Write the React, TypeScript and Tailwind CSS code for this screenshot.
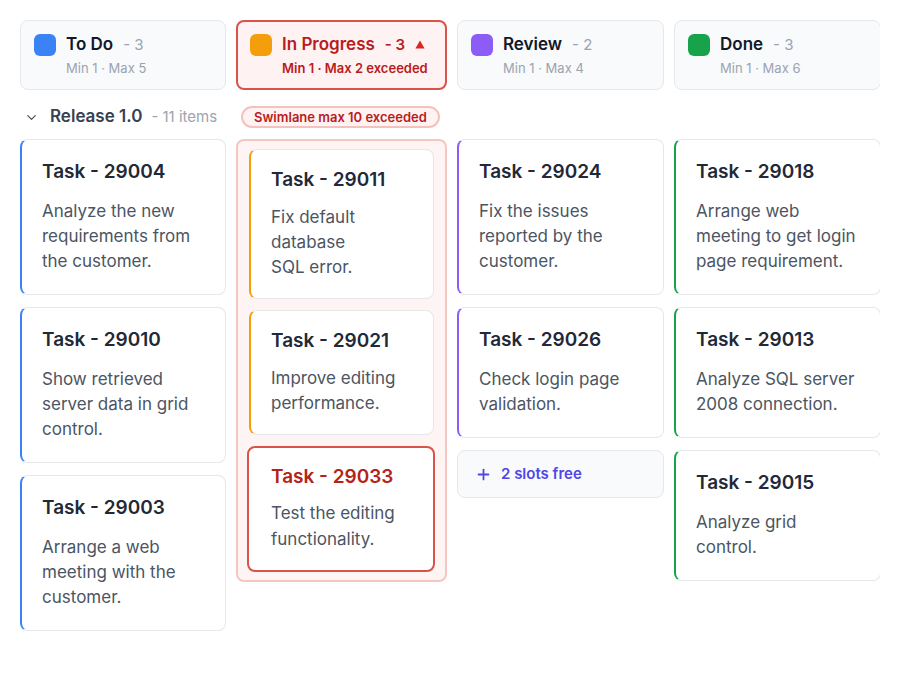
import { ChevronDown, Plus } from 'lucide-react';

type Task = { id: string; text: string; alert?: boolean };

const columns = [
  { key: 'todo', title: 'To Do', count: 3, min: 1, max: 5, square: 'bg-[#3b82f6]' },
  { key: 'progress', title: 'In Progress', count: 3, min: 1, max: 2, square: 'bg-[#f59e0b]' },
  { key: 'review', title: 'Review', count: 2, min: 1, max: 4, square: 'bg-[#8b5cf6]' },
  { key: 'done', title: 'Done', count: 3, min: 1, max: 6, square: 'bg-[#16a34a]' },
];

const tasks: Record<string, Task[]> = {
  todo: [
    { id: '29004', text: 'Analyze the new requirements from the customer.' },
    { id: '29010', text: 'Show retrieved server data in grid control.' },
    { id: '29003', text: 'Arrange a web meeting with the customer.' },
  ],
  progress: [
    { id: '29011', text: 'Fix default database\nSQL error.' },
    { id: '29021', text: 'Improve editing performance.' },
    { id: '29033', text: 'Test the editing functionality.', alert: true },
  ],
  review: [
    { id: '29024', text: 'Fix the issues reported by the customer.' },
    { id: '29026', text: 'Check login page validation.' },
  ],
  done: [
    { id: '29018', text: 'Arrange web meeting to get login page requirement.' },
    { id: '29013', text: 'Analyze SQL server 2008 connection.' },
    { id: '29015', text: 'Analyze grid control.' },
  ],
};

function Header({ col }: { col: (typeof columns)[number] }) {
  const over = col.count > col.max;
  return (
    <div
      className={`flex items-start gap-[10px] rounded-lg ${
        over
          ? 'border-2 border-[#d9534a] bg-[#fef2f2] px-[12px] pt-[12px] pb-[12px]'
          : 'border border-[#e5e7eb] bg-[#f8fafc] px-[13px] pt-[13px] pb-[13px]'
      }`}
    >
      <div className={`h-[22px] w-[22px] shrink-0 rounded-md ${col.square}`} />
      <div className="flex flex-col">
        <div className="flex items-center leading-[21px]">
          <span className={`text-[17px] font-semibold ${over ? 'text-[#b91c1c]' : 'text-[#111827]'}`}>{col.title}</span>
          <span className={`ml-[10px] text-[15px] ${over ? 'font-semibold text-[#b91c1c]' : 'text-[#9ca3af]'}`}>- {col.count}</span>
          {over && (
            <svg width="10" height="9" viewBox="0 0 10 9" className="ml-[10px]">
              <path d="M5 0.5 L9.6 8.5 L0.4 8.5 Z" fill="#dc2626" />
            </svg>
          )}
        </div>
        <div className={`mt-[5px] text-[13px] leading-[16px] ${over ? 'font-semibold text-[#b91c1c]' : 'text-[#9ca3af]'}`}>
          Min {col.min} · Max {col.max}
          {over ? ' exceeded' : ''}
        </div>
      </div>
    </div>
  );
}

function Card({ task, edge, compact }: { task: Task; edge: string; compact?: boolean }) {
  if (task.alert) {
    return (
      <div className="-ml-[2px] -mr-[1px] rounded-lg border-2 border-[#d9534a] bg-white px-[22px] pt-[16px] pb-[18px]">
        <div className="text-[19px] font-semibold leading-[26px] text-[#b42318]">Task - {task.id}</div>
        <div className="mt-[10px] text-[17px] leading-[26px] text-[#4b5563]">{task.text}</div>
      </div>
    );
  }
  return (
    <div
      className={`rounded-lg border border-[#e5e7eb] border-l-2 bg-white pl-[20px] pr-[20px] ${edge} ${
        compact ? 'pt-[17px] pb-[18px]' : 'pt-[19px] pb-[20px]'
      }`}
    >
      <div className="text-[19px] font-semibold leading-[26px] text-[#1f2937]">Task - {task.id}</div>
      <div className={`${compact ? 'mt-[12px]' : 'mt-[14px]'} whitespace-pre-line text-[17px] leading-[25px] text-[#4b5563]`}>
        {task.text}
      </div>
    </div>
  );
}

export default function App() {
  return (
    <div className="h-[700px] w-[900px] bg-white" style={{ fontFamily: 'Inter, "Noto Sans", sans-serif' }}>
      <div className="w-[880px] overflow-hidden pl-[20px] pt-[20px]">
        <div className="grid grid-cols-[206px_211px_207px_207px] gap-x-[10px]">
          {columns.map((c) => (
            <Header key={c.key} col={c} />
          ))}

          <div className="mt-[14px] mb-[9px] flex h-[26px] items-center">
            <ChevronDown size={15} strokeWidth={2} className="ml-[4px] text-[#4b5563]" />
            <span className="ml-[11px] text-[17px] font-semibold text-[#374151]">Release 1.0</span>
            <span className="ml-[9px] text-[15px] text-[#9ca3af]">- 11 items</span>
          </div>
          <div className="mt-[14px] mb-[9px] flex h-[26px] items-center">
            <span className="ml-[5px] rounded-full border-2 border-[#f4c2bd] bg-[#fef2f2] px-[11px] text-[13px] font-semibold leading-[18px] text-[#b91c1c]">
              Swimlane max 10 exceeded
            </span>
          </div>
          <div />
          <div />

          <div className="flex flex-col gap-3">
            {tasks.todo.map((t) => (
              <Card key={t.id} task={t} edge="border-l-[#3b82f6]" />
            ))}
          </div>

          <div className="self-start rounded-lg border-2 border-[#f4c6c2] bg-[#fef4f3] px-[11px] pt-[8px] pb-[8px]">
            <div className="flex flex-col gap-[11px]">
              {tasks.progress.map((t) => (
                <Card key={t.id} task={t} edge="border-l-[#f59e0b]" compact />
              ))}
            </div>
          </div>

          <div className="flex flex-col gap-3">
            {tasks.review.map((t) => (
              <Card key={t.id} task={t} edge="border-l-[#8b5cf6]" />
            ))}
            <div className="flex h-[48px] items-center rounded-lg border border-[#e5e7eb] bg-[#f8fafc] pl-[17px]">
              <Plus size={17} strokeWidth={2.5} className="text-[#4f46e5]" />
              <span className="ml-[9px] text-[15px] font-semibold text-[#4f46e5]">2 slots free</span>
            </div>
          </div>

          <div className="flex flex-col gap-3">
            {tasks.done.map((t) => (
              <Card key={t.id} task={t} edge="border-l-[#16a34a]" />
            ))}
          </div>
        </div>
      </div>
    </div>
  );
}
